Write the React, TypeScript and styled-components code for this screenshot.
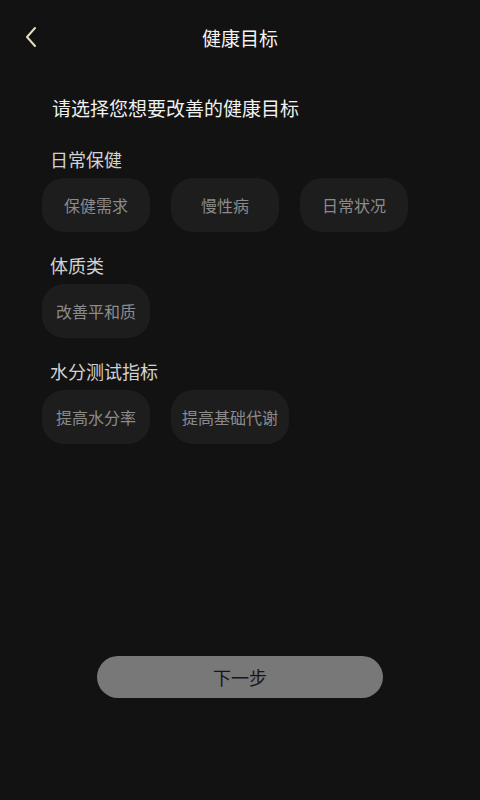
import React from "react";
import styled, { createGlobalStyle } from "styled-components";

const Global = createGlobalStyle`
  html, body { margin: 0; padding: 0; background: #121212; }
  body { font-family: "Noto Sans CJK SC", "Noto Sans", sans-serif; }
  * { box-sizing: border-box; }
`;

const Page = styled.div`
  width: 480px;
  height: 800px;
  background: #121212;
  display: flex;
  flex-direction: column;
`;

const Header = styled.div`
  height: 76px;
  display: grid;
  grid-template-columns: 60px 1fr 60px;
  align-items: center;
`;

const BackButton = styled.button`
  background: none;
  border: none;
  padding: 0 0 0 24px;
  height: 76px;
  display: flex;
  align-items: center;
  cursor: pointer;
  margin-top: -2px;
`;

const Title = styled.h1`
  margin: 0;
  text-align: center;
  font-size: 19px;
  font-weight: 400;
  color: #f2f2f2;
  margin-top: -1px;
`;

const Content = styled.div`
  flex: 1;
  padding: 0 0 0 42px;
  display: flex;
  flex-direction: column;
`;

const Lead = styled.p`
  margin: 18px 0 4px 10px;
  font-size: 19px;
  line-height: 28px;
  color: #f0f0f0;
`;

const Section = styled.section`
  margin-top: 20px;
  display: flex;
  flex-direction: column;
`;

const SectionTitle = styled.h2`
  margin: 0 0 6px 8px;
  font-size: 18px;
  line-height: 26px;
  font-weight: 400;
  color: #d2d2d2;
`;

const ChipRow = styled.div`
  display: flex;
  gap: 21px;
`;

const Chip = styled.button`
  min-width: 108px;
  height: 54px;
  padding: 0 11px;
  border: none;
  border-radius: 22px;
  background: #1d1d1e;
  color: #8b8b8b;
  font-family: "Noto Sans CJK SC", "Noto Sans", sans-serif;
  font-size: 16px;
  display: flex;
  align-items: center;
  justify-content: center;
  white-space: nowrap;
`;

const Footer = styled.div`
  display: flex;
  justify-content: center;
  padding-bottom: 102px;
`;

const NextButton = styled.button`
  width: 286px;
  height: 42px;
  border: none;
  border-radius: 21px;
  background: #787878;
  color: #161616;
  font-family: "Noto Sans CJK SC", "Noto Sans", sans-serif;
  font-size: 18px;
`;

const sections = [
  { title: "日常保健", chips: ["保健需求", "慢性病", "日常状况"] },
  { title: "体质类", chips: ["改善平和质"] },
  { title: "水分测试指标", chips: ["提高水分率", "提高基础代谢"] },
];

export default function App() {
  return (
    <>
      <Global />
      <Page>
        <Header>
          <BackButton aria-label="返回">
            <svg width="14" height="22" viewBox="0 0 14 22">
              <path d="M11 2 L3 11 L11 20" fill="none" stroke="#e6dcc2" strokeWidth="2" strokeLinecap="round" strokeLinejoin="round" />
            </svg>
          </BackButton>
          <Title>健康目标</Title>
          <div />
        </Header>
        <Content>
          <Lead>请选择您想要改善的健康目标</Lead>
          {sections.map((s) => (
            <Section key={s.title}>
              <SectionTitle>{s.title}</SectionTitle>
              <ChipRow>
                {s.chips.map((c) => (
                  <Chip key={c}>{c}</Chip>
                ))}
              </ChipRow>
            </Section>
          ))}
        </Content>
        <Footer>
          <NextButton>下一步</NextButton>
        </Footer>
      </Page>
    </>
  );
}
